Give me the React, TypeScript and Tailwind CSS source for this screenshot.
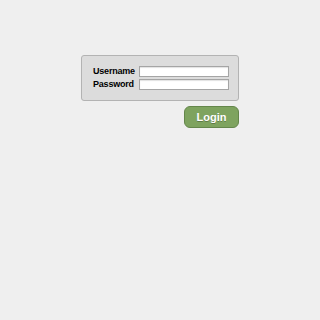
export default function App() {
  return (
    <div className="min-h-[320px] w-full bg-[#efefef] pt-[55px] font-['Liberation_Sans',Arial,sans-serif]">
      <div className="mx-auto flex w-[158px] flex-col">
        <form className="rounded-[3px] border border-[#b3b3b3] bg-[#dcdcdc] py-[10px] pl-[11px] pr-[9px]">
          <div className="grid grid-cols-[46px_90px] gap-y-[2px]">
            <label className="h-[11px] text-[9px] font-bold leading-[11px] tracking-[-0.2px] text-black">Username</label>
            <input
              type="text"
              className="h-[11px] w-[90px] border border-[#a5a5a5] bg-white shadow-[inset_0_1px_1px_rgba(0,0,0,0.12)] outline-none"
            />
            <label className="h-[11px] text-[9px] font-bold leading-[11px] tracking-[-0.2px] text-black">Password</label>
            <input
              type="password"
              className="h-[11px] w-[90px] border border-[#a5a5a5] bg-white shadow-[inset_0_1px_1px_rgba(0,0,0,0.12)] outline-none"
            />
          </div>
        </form>
        <button
          type="button"
          className="ml-auto mt-[5px] flex h-[22px] w-[55px] items-center justify-center rounded-[6px] border border-[#64864b] bg-[#7ea35f] text-[11px] font-bold text-white [text-shadow:0_1px_0_rgba(0,0,0,0.25)]"
        >
          Login
        </button>
      </div>
    </div>
  );
}
